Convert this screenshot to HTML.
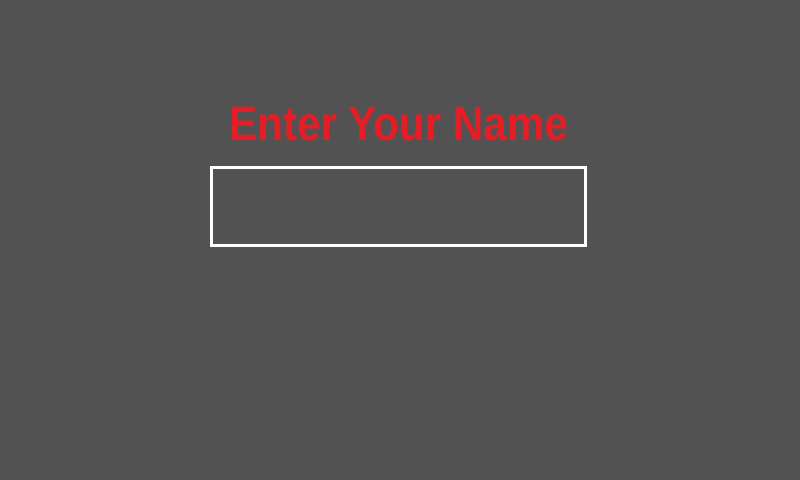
<!DOCTYPE html>
<html><head><style>
html,body{margin:0;padding:0;width:800px;height:480px;background:#525252;overflow:hidden}
.t{position:absolute;left:229px;top:99px;font-family:"Liberation Sans",sans-serif;font-weight:bold;font-size:48px;line-height:52px;color:#e31e27;white-space:nowrap;transform-origin:0 0;transform:scaleX(0.88)}
.b{position:absolute;left:210px;top:166px;width:371px;height:75px;border:3px solid #fff}
</style></head><body>
<div class="t">Enter Your Name</div>
<div class="b"></div>
</body></html>
